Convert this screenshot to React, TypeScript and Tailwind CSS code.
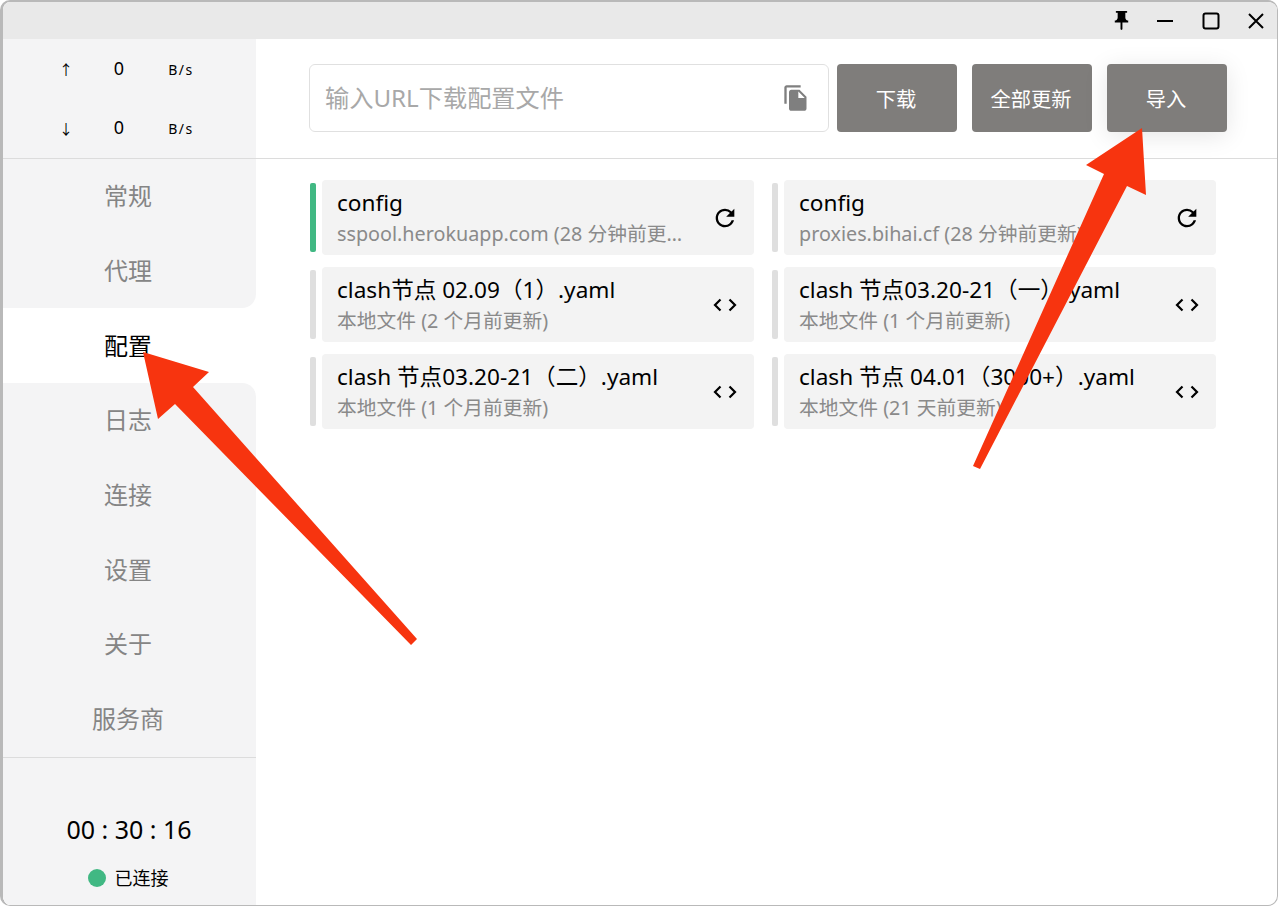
// Clash for Windows profile screen with the two red guide arrows on top

import { MdFileCopy, MdPushPin, MdRefresh } from 'react-icons/md'

const NAV = ['常规', '代理', '配置', '日志', '连接', '设置', '关于', '服务商']
const ACTIVE = 2

interface Profile {
  name: string
  sub: string
  remote?: boolean
  selected?: boolean
}

const PROFILES: Profile[] = [
  { name: 'config', sub: 'sspool.herokuapp.com (28 分钟前更新)', remote: true, selected: true },
  { name: 'config', sub: 'proxies.bihai.cf (28 分钟前更新)', remote: true },
  { name: 'clash节点 02.09（1）.yaml', sub: '本地文件 (2 个月前更新)' },
  { name: 'clash 节点03.20-21（一）.yaml', sub: '本地文件 (1 个月前更新)' },
  { name: 'clash 节点03.20-21（二）.yaml', sub: '本地文件 (1 个月前更新)' },
  { name: 'clash 节点 04.01（3000+）.yaml', sub: '本地文件 (21 天前更新)' },
]

function CodeIcon() {
  return (
    <svg width="24" height="24" viewBox="0 0 24 24" fill="none" stroke="currentColor" strokeWidth="2.2">
      <path d="M7.500 6.500 2 12l5.500 5.500" />
      <path d="M16.500 6.500 22 12l-5.500 5.500" />
    </svg>
  )
}

function TitleBar() {
  return (
    <div className="flex h-[37px] shrink-0 items-center justify-end bg-[#e9e9e9] text-black">
      <MdPushPin className="mr-[21px] h-[23px] w-[23px]" />
      <svg className="mr-[24px]" width="22" height="22" viewBox="0 0 22 22" stroke="currentColor" strokeWidth="2">
        <path d="M3 11h16" />
      </svg>
      <svg className="mr-[23px]" width="22" height="22" viewBox="0 0 22 22" fill="none" stroke="currentColor" strokeWidth="2">
        <rect x="3.500" y="3.500" width="15" height="15" rx="2" />
      </svg>
      <svg className="mr-[10px]" width="22" height="22" viewBox="0 0 22 22" stroke="currentColor" strokeWidth="2">
        <path d="M4 4l14 14M18 4 4 18" />
      </svg>
    </div>
  )
}

function TrafficRow({ arrow }: { arrow: string }) {
  return (
    <div className="flex h-[59px] items-center pl-[33px] text-black">
      <span className="w-[60px] text-center text-[14px]">{arrow}</span>
      <span className="w-[46px] pb-[2px] text-center text-[18px]">0</span>
      <span className="w-[78px] text-center text-[14px] tracking-[1.500px]">B/s</span>
    </div>
  )
}

function Sidebar() {
  return (
    <div className="flex w-[253px] shrink-0 flex-col bg-white">
      <div className="flex h-[120px] flex-col justify-center border-b border-[#dcdcdc] bg-[#f4f4f5]">
        <TrafficRow arrow="↑" />
        <TrafficRow arrow="↓" />
      </div>
      <div className="flex flex-col">
        {NAV.map((label, i) => (
          <div
            key={label}
            className={
              'flex h-[74.700px] items-center justify-center pr-[3px] text-[24px] ' +
              (i === ACTIVE
                ? 'bg-white text-black'
                : i === ACTIVE - 1
                  ? 'rounded-br-[14px] bg-[#f4f4f5] text-[#858585]'
                  : i === ACTIVE + 1
                    ? 'rounded-tr-[14px] bg-[#f4f4f5] text-[#858585]'
                    : 'bg-[#f4f4f5] text-[#858585]')
            }
          >
            {label}
          </div>
        ))}
      </div>
      <div className="flex flex-1 flex-col items-center border-t border-[#dcdcdc] bg-[#f4f4f5] pt-[53px] pr-[1px]">
        <div className="text-[25px] leading-[36px] text-black">00 : 30 : 16</div>
        <div className="mt-[18px] mr-[2px] flex items-center gap-[9px] text-[18px] leading-[26px] text-black">
          <span className="h-[18px] w-[18px] rounded-full bg-[#41b883]" />
          已连接
        </div>
      </div>
    </div>
  )
}

function ActionButton({ label, raised }: { label: string; raised?: boolean }) {
  return (
    <button
      className={
        'h-[68px] w-[120px] rounded-[4px] bg-[#7f7d7b] pt-[3px] pr-[2px] text-[20.250px] text-white ' +
        (raised ? 'shadow-[0_4px_24px_rgba(0,0,0,0.1)]' : '')
      }
    >
      {label}
    </button>
  )
}

function ProfileCard({ profile }: { profile: Profile }) {
  return (
    <div className="flex h-[75px] items-center gap-[6px]">
      <div className={'h-[69px] w-[6px] rounded-[2px] ' + (profile.selected ? 'bg-[#41b883]' : 'bg-[#dfdfdf]')} />
      <div className="flex h-full min-w-0 flex-1 items-center rounded-[4px] bg-[#f3f3f3] pl-[15px]">
        <div className="min-w-0 flex-1 pt-[1px]">
          <div className="truncate text-[22.600px] leading-[31px] text-black">{profile.name}</div>
          <div className="truncate text-[19.750px] leading-[31px] text-[#8a8a8a]">{profile.sub}</div>
        </div>
        <div className="ml-[8px] flex w-[58px] shrink-0 justify-center text-black">
          {profile.remote ? <MdRefresh className="h-[28px] w-[28px]" /> : <CodeIcon />}
        </div>
      </div>
    </div>
  )
}

function GuideArrows() {
  return (
    <svg className="pointer-events-none absolute top-0 left-0" width="1278" height="906" viewBox="0 0 1278 906">
      <polygon fill="#f7340f" points="143,352 209,372 193,387 417,639 411,645 175,404 158,419" />
      <polygon fill="#f7340f" points="1142,128 1086,165 1104,174 973,466 980,469 1127,186 1146,195" />
    </svg>
  )
}

export default function App() {
  return (
    <div
      className="relative h-[906px] w-[1278px] overflow-hidden bg-white"
      style={{ fontFamily: '"Noto Sans", "Noto Sans CJK SC", sans-serif' }}
    >
      <div className="flex h-full flex-col overflow-hidden rounded-[10px] border-t-2 border-r border-b border-l-[3px] border-[#b9b9b9]">
        <TitleBar />
        <div className="flex min-h-0 flex-1">
          <Sidebar />
          <div className="flex min-w-0 flex-1 flex-col">
            <div className="flex h-[120px] shrink-0 items-center border-b border-[#dcdcdc] pr-[50px] pb-[2px] pl-[53px]">
              <div className="flex h-[68px] w-[520px] items-center justify-between rounded-[6px] border border-[#e0e0e0] pr-[18px] pl-[15px]">
                <span className="pt-[2px] text-[24.200px] text-[#a8a8a8]">输入URL下载配置文件</span>
                <MdFileCopy className="h-[28px] w-[28px] text-[#7f7f7f]" />
              </div>
              <div className="ml-[8px] flex gap-[15px]">
                <ActionButton label="下载" />
                <ActionButton label="全部更新" />
                <ActionButton label="导入" raised />
              </div>
            </div>
            <div className="grid grid-cols-[444px_444px] gap-x-[18px] gap-y-[12px] pt-[21px] pl-[54px]">
              {PROFILES.map((p, i) => (
                <ProfileCard key={i} profile={p} />
              ))}
            </div>
          </div>
        </div>
      </div>
      <GuideArrows />
    </div>
  )
}
